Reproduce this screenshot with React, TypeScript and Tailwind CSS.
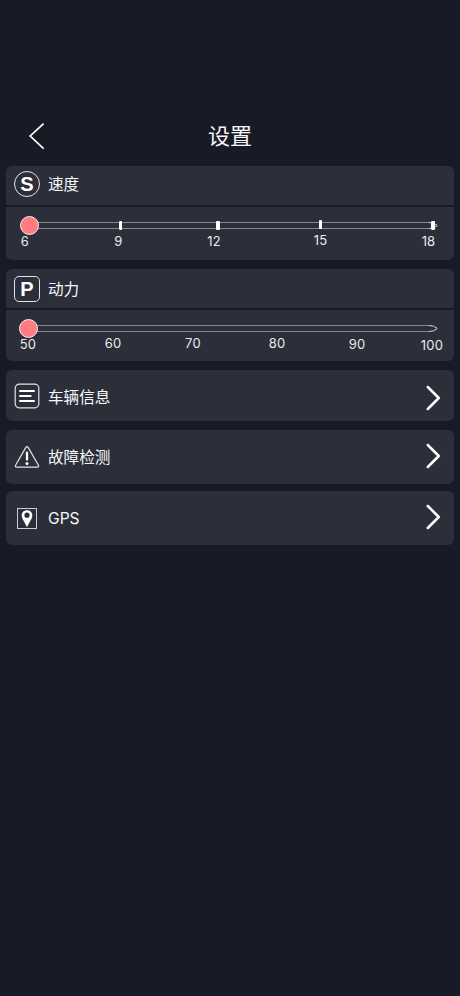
import React from "react";

function Chevron() {
  return (
    <svg width="16" height="26" viewBox="0 0 16 26" fill="none" stroke="#fff" strokeWidth="2.5" strokeLinecap="round" strokeLinejoin="round">
      <path d="M2.8 2 L13.8 13 L2.8 24" />
    </svg>
  );
}

function InfoIcon() {
  return (
    <svg width="26" height="26" viewBox="0 0 26 26" fill="none" stroke="#fff">
      <rect x="1.2" y="1.2" width="23.6" height="23.6" rx="4" stroke="#e2e4e8" strokeWidth="1.2" />
      <path d="M6 8H20M6 13H16.7M6 18H20" strokeWidth="2" strokeLinecap="round" />
    </svg>
  );
}

function WarningIcon() {
  return (
    <svg width="26" height="26" viewBox="0 0 26 26" fill="none">
      <path d="M11.7 3.6 Q13 1.6 14.3 3.6 L24.4 21.2 Q25.3 23.1 23.3 23.2 H2.7 Q.7 23.1 1.6 21.2Z" stroke="#e2e4e8" strokeWidth="1.2" />
      <path d="M13 8.7V15.6" stroke="#fff" strokeWidth="2.3" strokeLinecap="round" />
      <circle cx="13" cy="19.4" r="1.5" fill="#fff" />
    </svg>
  );
}

function GpsIcon() {
  return (
    <svg width="26" height="26" viewBox="0 0 26 26" fill="none">
      <rect x="3.5" y="3.5" width="19" height="20" stroke="#c9ccd2" strokeWidth="1" />
      <path fillRule="evenodd" d="M13 5.2C9.8 5.2 7.7 7.4 7.7 10.4C7.7 13.8 11 17.4 13 22.2C15 17.4 18.3 13.8 18.3 10.4C18.3 7.4 16.2 5.2 13 5.2ZM13 7.6A2.6 2.6 0 1 1 13 12.8A2.6 2.6 0 1 1 13 7.6Z" fill="#fff" />
    </svg>
  );
}

function LinkRow({ icon, label, className, text, arrow }: { icon: React.ReactNode; label: string; className: string; text: string; arrow: string }) {
  return (
    <button className={`flex w-full items-center rounded-md bg-[#2c2f39] pr-[13px] pl-2 ${className}`}>
      {icon}
      <span className={`ml-[8px] flex-1 text-left text-[15.6px] leading-5 ${text}`}>{label}</span>
      <span className={arrow}><Chevron /></span>
    </button>
  );
}

const ticks = ["left-[112.5px] top-[-1px]", "left-[210px] top-[-1px]", "left-[312.5px] top-[-2px]", "left-[425px] top-[-1px]"];

const speeds = [
  { value: 6, cell: "w-[38px] pt-px" },
  { value: 9, cell: "w-[149px] pt-px" },
  { value: 12, cell: "w-[42px] pt-px" },
  { value: 15, cell: "w-[171px]" },
  { value: 18, cell: "w-[45px] pt-px" },
];

const powers = [
  { value: 50, cell: "w-[44px] pt-px" },
  { value: 60, cell: "w-[126px]" },
  { value: 70, cell: "w-[34px]" },
  { value: 80, cell: "w-[134px]" },
  { value: 90, cell: "w-[26px] pt-px" },
  { value: 100, cell: "ml-[40px] w-[44px] pt-0.5" },
];

function Scale({ items }: { items: { value: number; cell: string }[] }) {
  return (
    <div className="flex text-[13px] leading-[14px] text-[#e9eaed]">
      {items.map((i) => (
        <span key={i.value} className={`shrink-0 text-center tracking-[0.2px] ${i.cell}`}>{i.value}</span>
      ))}
    </div>
  );
}

function Track({ thumb }: { thumb: string }) {
  return (
    <div className="relative ml-[22px] h-[7px] w-[410px]">
      <svg className="block" width="410" height="7" viewBox="0 0 410 7" fill="none">
        <path d="M0 .5H402M0 6.5H402" stroke="#858890" />
        <path d="M401 .5Q406 .5 409 3.2V3.8Q406 6.5 401 6.5" stroke="#d5d7db" />
      </svg>
      <span className={`absolute size-[19px] rounded-full border-[1.5px] border-[#f7eef0] bg-[#ff7c80] ${thumb}`} />
    </div>
  );
}

export default function App() {
  return (
    <main className="min-h-[996px] w-[460px] bg-[#171b25] px-1.5 pt-[108px] font-['Inter','Noto_Sans_CJK_SC',sans-serif] text-[#f6f7f9]">
      <header className="mb-[2px] grid h-[56px] grid-cols-[1fr_auto_1fr] items-center">
        <button className="ml-[22px] w-[18px]" aria-label="返回">
          <svg width="18" height="28" viewBox="0 0 18 28" fill="none" stroke="#fff" strokeWidth="1.7">
            <path d="M15.6 1.6 L2.2 14 L15.6 26.6" />
          </svg>
        </button>
        <h1 className="text-[22px] leading-[30px] font-normal">设置</h1>
      </header>

      <section>
        <div className="flex h-[39px] items-center rounded-t-md bg-[#2c2f39] pb-[4px] pl-2">
          <span className="flex size-[26px] items-center justify-center rounded-full border border-[#e2e4e8] font-['Liberation_Sans',sans-serif] text-[20px] leading-none font-bold text-white">S</span>
          <h2 className="mt-[3px] ml-[8px] text-[15.6px] leading-5">速度</h2>
        </div>
        <div className="mt-0.5 h-[53px] rounded-b-md bg-[#2c2f39] pt-[15px]">
          <Track thumb="top-[-6px] left-[-8px]" />
          <div className="relative -mt-[7px] h-[7px]">
            {ticks.map((t) => <span key={t} className={`absolute h-[9px] w-[3.5px] rounded-[1px] bg-white ${t}`} />)}
          </div>
          <div className="pt-[4px]"><Scale items={speeds} /></div>
        </div>
      </section>

      <section className="mt-[9px]">
        <div className="flex h-[39px] items-center rounded-t-md bg-[#2c2f39] pl-2">
          <span className="flex size-[26px] items-center justify-center rounded-[5px] border border-[#e2e4e8] font-['Liberation_Sans',sans-serif] text-[20px] leading-none font-bold text-white">P</span>
          <h2 className="mt-[3px] ml-[8px] text-[15.6px] leading-5">动力</h2>
        </div>
        <div className="mt-0.5 h-[51px] rounded-b-md bg-[#2c2f39] pt-[15px]">
          <Track thumb="top-[-6px] left-[-9px]" />
          <div className="pt-[4px]"><Scale items={powers} /></div>
        </div>
      </section>

      <nav>
        <LinkRow className="mt-[9px] h-[51px]" icon={<InfoIcon />} label="车辆信息" text="translate-y-[2px]" arrow="translate-y-[2px]" />
        <LinkRow className="mt-[9px] h-[54px]" icon={<WarningIcon />} label="故障检测" text="translate-y-px" arrow="-translate-y-px" />
        <LinkRow className="mt-[7px] h-[54px]" icon={<GpsIcon />} label="GPS" text="translate-y-px" arrow="-translate-y-px" />
      </nav>
    </main>
  );
}
